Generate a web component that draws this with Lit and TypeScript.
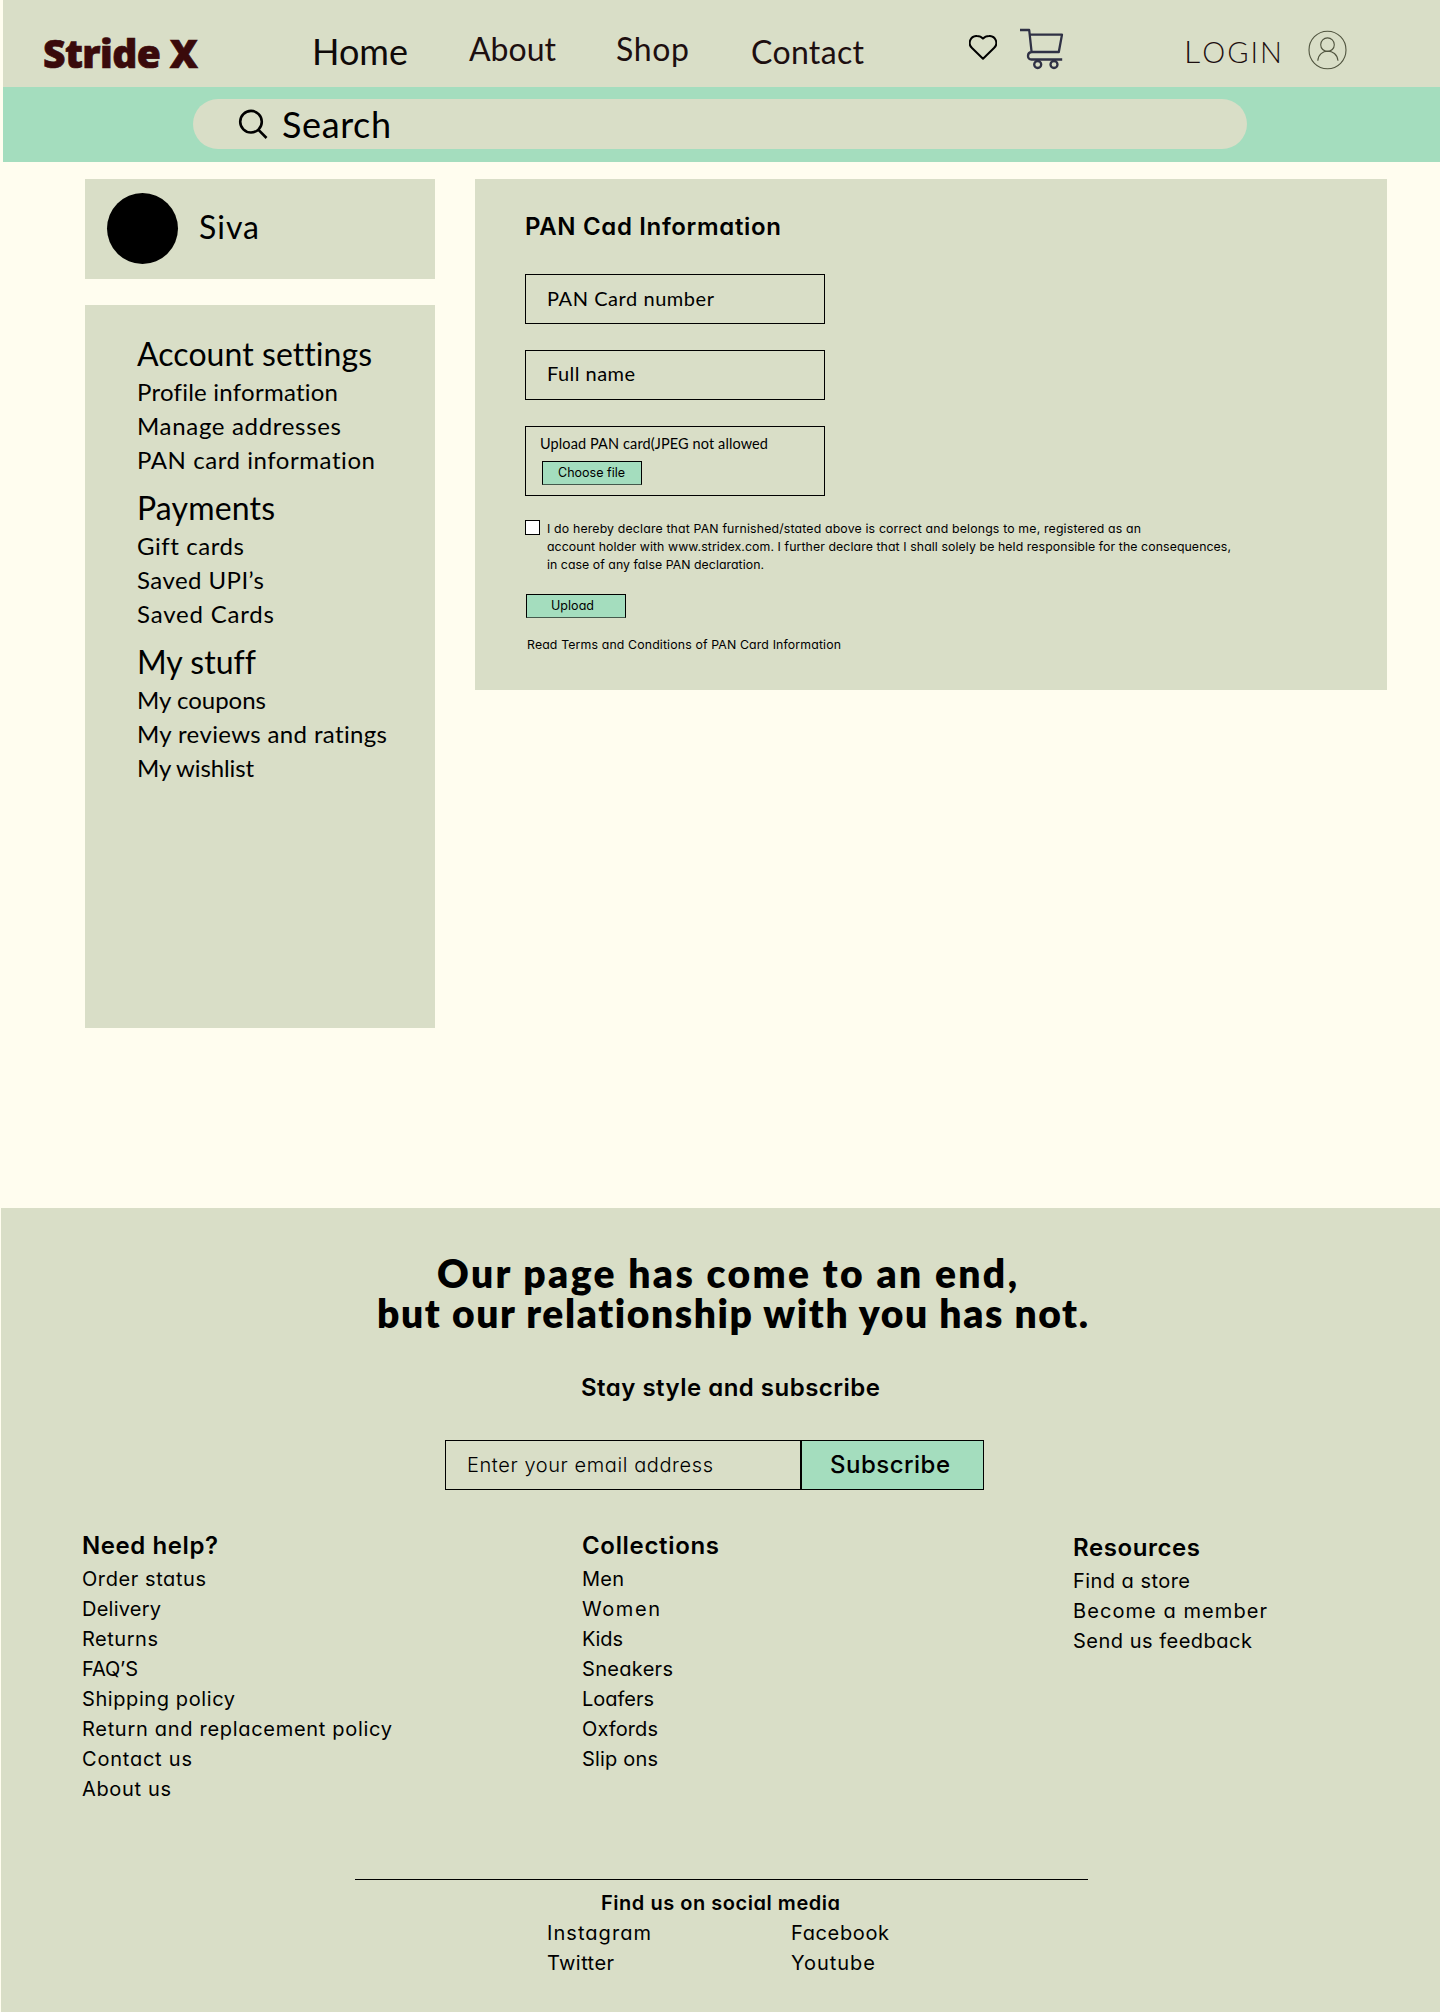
import { LitElement, html, css } from "lit";
import { customElement, property } from "lit/decorators.js";

type Line = [text: string, width: number];

/** One line of text, tracked so that it fills exactly `measure` pixels. */
@customElement("fit-text")
class FitText extends LitElement {
  static styles = css`
    :host {
      display: block;
      flex: none;
      white-space: nowrap;
      font-variant-ligatures: none;
    }
    .run {
      display: inline-block;
      vertical-align: top;
    }
  `;

  @property({ type: Number }) measure = 0;

  render() {
    return html`<span class="run"><slot></slot></span>`;
  }

  updated() {
    const run = this.renderRoot.querySelector(".run") as HTMLElement;
    this.style.letterSpacing = "0px";
    const count = (this.textContent ?? "").trim().length;
    const natural = run.getBoundingClientRect().width;
    if (count > 1 && this.measure > 0) {
      this.style.letterSpacing = `${(this.measure - natural) / (count - 1)}px`;
      this.style.width = `${this.measure}px`;
    }
  }
}

const line = (cls: string, [text, width]: Line) =>
  html`<fit-text class=${cls} measure=${width}>${text}</fit-text>`;

const shared = css`
  * {
    box-sizing: border-box;
  }
  .geo {
    font-family: Inter, "Open Sans", sans-serif;
    font-feature-settings: "cv11" 1;
  }
  .jos {
    font-family: Lato, "Open Sans", sans-serif;
  }
`;

@customElement("site-header")
class SiteHeader extends LitElement {
  static styles = [
    shared,
    css`
      :host {
        display: block;
        margin-left: 3px;
      }
      .bar {
        display: flex;
        align-items: flex-start;
        height: 87px;
        background: #d9dec7;
        line-height: 40px;
      }
      .logo {
        margin: 33px 0 0 40px;
        font: 800 39px/40px "Open Sans", sans-serif;
        -webkit-text-stroke: 0.7px #3a0a0b;
        color: #3a0a0b;
      }
      .home {
        margin: 31px 0 0 114px;
        font-size: 36px;
        color: #0f0a09;
      }
      .link {
        font-size: 32px;
        color: #1d0f10;
      }
      .about {
        margin: 29px 0 0 61px;
      }
      .shop {
        margin: 29px 0 0 60px;
      }
      .contact {
        margin: 32px 0 0 62px;
      }
      .heart {
        margin: 35px 0 0 105px;
      }
      .cart {
        margin: 28px 0 0 21px;
      }
      .login {
        margin: 32px 0 0 120px;
        font-size: 29px;
        font-weight: 300;
        color: #1d0f10;
      }
      .initial {
        font-size: 32px;
        line-height: 1px;
      }
      .user {
        margin: 30px 0 0 26px;
      }
      svg {
        display: block;
        flex: none;
        fill: none;
      }
      .search-row {
        display: flex;
        height: 75px;
        padding: 12px 0 0 190px;
        background: #a4ddbe;
      }
      .pill {
        display: flex;
        width: 1054px;
        height: 50px;
        padding-left: 44px;
        border-radius: 25px;
        background: #d9dec7;
      }
      .glass {
        margin: 10px 13px 0 1px;
      }
      .search {
        margin-top: 5px;
        font-size: 36px;
        line-height: 40px;
        color: #000;
      }
    `,
  ];

  render() {
    return html`
      <div class="bar">
        ${line("logo", ["Stride X", 155])} ${line("jos home", ["Home", 96])}
        ${line("jos link about", ["About", 87])}
        ${line("jos link shop", ["Shop", 73])}
        ${line("jos link contact", ["Contact", 113])}
        <svg class="heart" width="28" height="26" viewBox="0 0 28 26">
          <path
            d="M14 23.8 3 13A6.9 6.9 0 0 1 8 1C10.5 1 12.6 2 14 3.6 15.4 2 17.5 1 20 1A6.9 6.9 0 0 1 25 13Z"
            stroke="#000"
            stroke-width="2"
            stroke-linejoin="round"
          />
        </svg>
        <svg class="cart" width="46" height="42" viewBox="0 0 46 42">
          <g stroke="#2f3145" stroke-width="2.3" stroke-linejoin="round">
            <path
              d="M2 2H11.2L13.6 24H40.8L44 6.6H11.8M13.6 24C8.8 24.5 8.8 31.5 13.5 31.5H44.2"
            />
            <circle cx="19.7" cy="36.5" r="3.5" />
            <circle cx="36" cy="36.5" r="3.5" />
          </g>
        </svg>
        <fit-text class="jos login" measure="98"
          ><span class="initial">L</span>OGIN</fit-text
        >
        <svg class="user" width="40" height="40" viewBox="0 0 40 40">
          <g stroke="#50543f" stroke-width="1.1">
            <ellipse cx="19.5" cy="20" rx="18.5" ry="18.8" />
            <circle cx="19.5" cy="14.7" r="6.8" />
            <path d="M9.8 30.8C10.500 17.900 28.800 17.900 30 30.800" />
          </g>
        </svg>
      </div>
      <div class="search-row">
        <div class="pill">
          <svg class="glass" width="31" height="31" viewBox="0 0 31 31">
            <g stroke="#000" stroke-width="2.6">
              <circle cx="13" cy="12.7" r="10.8" />
              <path d="M20.5 20.8 28.5 29" />
            </g>
          </svg>
          ${line("jos search", ["Search", 109])}
        </div>
      </div>
    `;
  }
}

const menu: { title: Line; items: Line[] }[] = [
  {
    title: ["Account settings", 235],
    items: [
      ["Profile information", 201],
      ["Manage addresses", 204],
      ["PAN card information", 238],
    ],
  },
  {
    title: ["Payments", 138],
    items: [
      ["Gift cards", 107],
      ["Saved UPI’s", 127],
      ["Saved Cards", 137],
    ],
  },
  {
    title: ["My stuff", 119],
    items: [
      ["My coupons", 129],
      ["My reviews and ratings", 250],
      ["My wishlist", 117],
    ],
  },
];

@customElement("account-menu")
class AccountMenu extends LitElement {
  static styles = [
    shared,
    css`
      :host {
        display: flex;
        flex-direction: column;
        gap: 26px;
        width: 350px;
        color: #000;
      }
      .card {
        background: #d9dec7;
      }
      .profile {
        display: flex;
        height: 100px;
        padding: 14px 22px;
      }
      .avatar {
        width: 71px;
        height: 71px;
        margin-right: 21px;
        border-radius: 50%;
        background: #000;
      }
      .name {
        margin-top: 14px;
        font-size: 32px;
        line-height: 40px;
      }
      .list {
        display: flex;
        flex-direction: column;
        gap: 10px;
        height: 723px;
        padding: 28px 0 0 52px;
      }
      .title {
        font-size: 32px;
        line-height: 42px;
      }
      .item {
        font-size: 24px;
        line-height: 34px;
      }
    `,
  ];

  render() {
    return html`
      <div class="card profile">
        <div class="avatar"></div>
        ${line("jos name", ["Siva", 60])}
      </div>
      <div class="card list">
        ${menu.map(
          (group) => html`<div>
            ${line("jos title", group.title)}
            ${group.items.map((item) => line("jos item", item))}
          </div>`
        )}
      </div>
    `;
  }
}

@customElement("pan-form")
class PanForm extends LitElement {
  static styles = [
    shared,
    css`
      :host {
        display: block;
        width: 912px;
        height: 511px;
        padding: 30px 0 0 50px;
        background: #d9dec7;
        color: #000;
        box-sizing: border-box;
      }
      .title {
        font-size: 24px;
        font-weight: 600;
        line-height: 36px;
      }
      .fields {
        display: flex;
        flex-direction: column;
        gap: 26px;
        width: 300px;
        margin-top: 29px;
      }
      .field {
        height: 50px;
        padding: 11px 0 0 21px;
        border: 1px solid #000;
        font-size: 20px;
        line-height: 24px;
      }
      .name {
        padding-top: 10px;
      }
      .file {
        height: 70px;
        padding: 8px 0 0 14px;
      }
      .hint {
        font-size: 14.5px;
        line-height: 18px;
      }
      .button {
        width: 100px;
        height: 24px;
        border: 1px solid #000;
        border-bottom-color: #44594c;
        background: #a4ddbe;
        font-size: 12.5px;
        line-height: 22px;
      }
      .choose {
        margin: 8px 0 0 2px;
        padding-left: 15px;
      }
      .upload {
        margin: 20px 0 0 1px;
        padding-left: 24px;
      }
      .declare {
        display: flex;
        gap: 7px;
        margin-top: 24px;
      }
      .box {
        width: 15px;
        height: 15px;
        border: 1px solid #000;
        background: #fff;
      }
      .small {
        font-size: 12.3px;
        line-height: 18px;
      }
      .terms {
        margin: 18px 0 0 2px;
      }
    `,
  ];

  render() {
    return html`
      ${line("geo title", ["PAN Cad Information", 256])}
      <div class="fields">
        <div class="field">${line("jos", ["PAN Card number", 167])}</div>
        <div class="field name">${line("jos", ["Full name", 88])}</div>
        <div class="field file">
          ${line("jos hint", ["Upload PAN card(JPEG not allowed", 228])}
          <div class="button choose">${line("geo", ["Choose file", 67])}</div>
        </div>
      </div>
      <div class="declare">
        <div class="box"></div>
        <div>
          ${line("geo small", [
            "I do hereby declare that PAN furnished/stated above is correct and belongs to me, registered as an",
            594,
          ])}
          ${line("geo small", [
            "account holder with www.stridex.com. I further declare that I shall solely be held responsible for the consequences,",
            684,
          ])}
          ${line("geo small", ["in case of any false PAN declaration.", 217])}
        </div>
      </div>
      <div class="button upload">${line("geo", ["Upload", 43])}</div>
      ${line("geo small terms", ["Read Terms and Conditions of PAN Card Information", 314])}
    `;
  }
}

const columns: { name: string; title: Line; items: Line[] }[] = [
  {
    name: "help",
    title: ["Need help?", 136],
    items: [
      ["Order status", 124],
      ["Delivery", 79],
      ["Returns", 76],
      ["FAQ’S", 56],
      ["Shipping policy", 153],
      ["Return and replacement policy", 310],
      ["Contact us", 110],
      ["About us", 89],
    ],
  },
  {
    name: "collections",
    title: ["Collections", 137],
    items: [
      ["Men", 42],
      ["Women", 78],
      ["Kids", 41],
      ["Sneakers", 91],
      ["Loafers", 72],
      ["Oxfords", 76],
      ["Slip ons", 76],
    ],
  },
  {
    name: "resources",
    title: ["Resources", 127],
    items: [
      ["Find a store", 117],
      ["Become a member", 194],
      ["Send us feedback", 179],
    ],
  },
];

@customElement("site-footer")
class SiteFooter extends LitElement {
  static styles = [
    shared,
    css`
      :host {
        display: flex;
        flex-direction: column;
        flex: 1;
        margin-left: 1px;
        background: #d9dec7;
        color: #000;
      }
      .headline {
        display: flex;
        flex-direction: column;
        padding: 45px 0 0 376px;
        font-size: 39px;
        font-weight: 800;
        line-height: 40px;
      }
      .first {
        margin-left: 60px;
      }
      .stay {
        margin: 37px 0 0 580px;
        font-size: 24px;
        font-weight: 600;
        line-height: 36px;
      }
      .subscribe {
        display: flex;
        width: 539px;
        height: 50px;
        margin: 34px 0 0 444px;
      }
      .email {
        width: 356px;
        padding: 12px 0 0 21px;
        border: 1px solid #000;
        font-size: 20px;
        font-weight: 300;
        line-height: 24px;
      }
      .go {
        flex: 1;
        padding: 11px 0 0 28px;
        border: 1px solid #000;
        background: #a4ddbe;
        font-size: 24px;
        font-weight: 500;
        line-height: 26px;
      }
      .columns {
        display: grid;
        grid-template-columns: 500px 491px auto;
        height: 276px;
        margin: 38px 0 0 81px;
      }
      .resources {
        padding-top: 2px;
      }
      .title {
        font-size: 24px;
        font-weight: 600;
        line-height: 36px;
      }
      .item {
        font-size: 20px;
        line-height: 30px;
      }
      .rule {
        width: 733px;
        height: 1px;
        margin: 75px 0 8px 354px;
        background: #000;
      }
      .find {
        margin-left: 600px;
        font-size: 20px;
        font-weight: 600;
        line-height: 30px;
      }
      .social {
        display: grid;
        grid-template-columns: 244px auto;
        margin-left: 546px;
      }
    `,
  ];

  render() {
    return html`
      <div class="headline">
        ${line("jos first", ["Our page has come to an end,", 580])}
        ${line("jos", ["but our relationship with you has not.", 711])}
      </div>
      ${line("geo stay", ["Stay style and subscribe", 299])}
      <div class="subscribe">
        <div class="email">
          ${line("geo", ["Enter your email address", 246])}
        </div>
        <div class="go">${line("geo", ["Subscribe", 120])}</div>
      </div>
      <div class="columns">
        ${columns.map(
          (col) => html`<div class=${col.name}>
            ${line("geo title", col.title)}
            ${col.items.map((item) => line("geo item", item))}
          </div>`
        )}
      </div>
      <div class="rule"></div>
      ${line("geo find", ["Find us on social media", 239])}
      <div class="social">
        ${line("geo item", ["Instagram", 104])}
        ${line("geo item", ["Facebook", 98])}
        ${line("geo item", ["Twitter", 67])}
        ${line("geo item", ["Youtube", 84])}
      </div>
    `;
  }
}

@customElement("app-root")
class AppRoot extends LitElement {
  static styles = css`
    :host {
      display: flex;
      flex-direction: column;
      width: 1440px;
      height: 2012px;
      overflow: hidden;
      background: #fffdef;
    }
    .content {
      box-sizing: border-box;
      display: flex;
      gap: 40px;
      align-items: flex-start;
      height: 1046px;
      flex: none;
      padding: 17px 0 0 85px;
    }
  `;

  render() {
    return html`
      <site-header></site-header>
      <div class="content">
        <account-menu></account-menu>
        <pan-form></pan-form>
      </div>
      <site-footer></site-footer>
    `;
  }
}
